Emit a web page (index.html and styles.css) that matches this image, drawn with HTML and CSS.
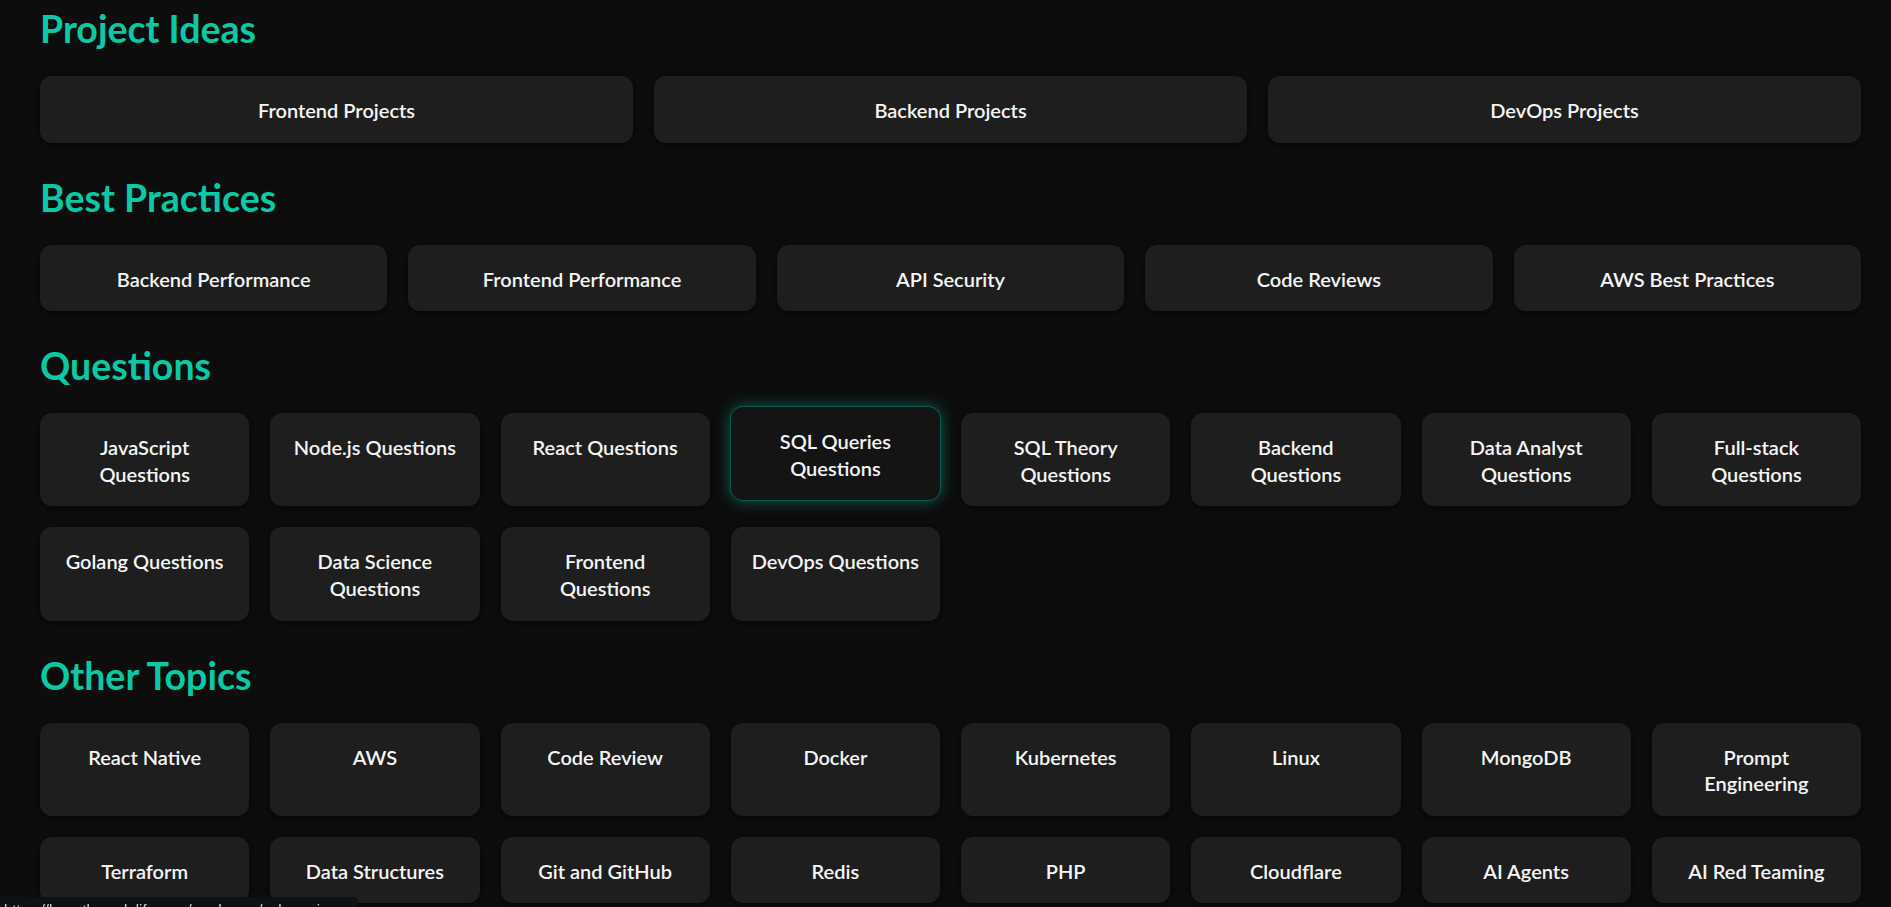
FILE: index.html
```html
<!DOCTYPE html>
<html lang="en">
<head>
<meta charset="utf-8">
<title>Guides</title>
<link rel="stylesheet" href="styles.css">
</head>
<body>
<main class="page">
  <section class="section">
    <h2 class="section-title">Project Ideas</h2>
    <div class="grid grid-3">
      <a class="card" href="#">Frontend Projects</a>
      <a class="card" href="#">Backend Projects</a>
      <a class="card" href="#">DevOps Projects</a>
    </div>
  </section>

  <section class="section">
    <h2 class="section-title">Best Practices</h2>
    <div class="grid grid-5">
      <a class="card" href="#">Backend Performance</a>
      <a class="card" href="#">Frontend Performance</a>
      <a class="card" href="#">API Security</a>
      <a class="card" href="#">Code Reviews</a>
      <a class="card" href="#">AWS Best Practices</a>
    </div>
  </section>

  <section class="section">
    <h2 class="section-title">Questions</h2>
    <div class="grid grid-8">
      <a class="card" href="#">JavaScript Questions</a>
      <a class="card" href="#">Node.js Questions</a>
      <a class="card" href="#">React Questions</a>
      <a class="card card-active" href="#">SQL Queries Questions</a>
      <a class="card" href="#">SQL Theory Questions</a>
      <a class="card" href="#">Backend Questions</a>
      <a class="card" href="#">Data Analyst Questions</a>
      <a class="card" href="#">Full-stack Questions</a>
      <a class="card" href="#">Golang Questions</a>
      <a class="card" href="#">Data Science Questions</a>
      <a class="card" href="#">Frontend Questions</a>
      <a class="card" href="#">DevOps Questions</a>
    </div>
  </section>

  <section class="section">
    <h2 class="section-title">Other Topics</h2>
    <div class="grid grid-8">
      <a class="card" href="#">React Native</a>
      <a class="card" href="#">AWS</a>
      <a class="card" href="#">Code Review</a>
      <a class="card" href="#">Docker</a>
      <a class="card" href="#">Kubernetes</a>
      <a class="card" href="#">Linux</a>
      <a class="card" href="#">MongoDB</a>
      <a class="card" href="#">Prompt Engineering</a>
      <a class="card" href="#">Terraform</a>
      <a class="card" href="#">Data Structures</a>
      <a class="card" href="#">Git and GitHub</a>
      <a class="card" href="#">Redis</a>
      <a class="card" href="#">PHP</a>
      <a class="card" href="#">Cloudflare</a>
      <a class="card" href="#">AI Agents</a>
      <a class="card" href="#">AI Red Teaming</a>
    </div>
  </section>
</main>
<div class="status-bar">https://learnthecodelife.com/roadmaps/sql-queries-questions</div>
</body>
</html>
```

FILE: styles.css
```css
html, body {
  margin: 0;
  padding: 0;
  background: #0d0d0d;
}

body {
  font-family: Lato, "Open Sans", "Noto Sans", sans-serif;
  color: #f4f4f4;
  overflow: hidden;
}

.page {
  padding: 6px 30px 0 40px;
}

.section {
  margin-bottom: 32px;
}

.section-title {
  margin: 0 0 25px 0;
  font-size: 37.5px;
  line-height: 45px;
  font-weight: 700;
  color: #0cc9a5;
}

.grid {
  display: grid;
  gap: 21px;
}

.grid-3 { grid-template-columns: repeat(3, 1fr); }
.grid-5 { grid-template-columns: repeat(5, 1fr); }
.grid-8 { grid-template-columns: repeat(8, 1fr); }

.card {
  display: block;
  padding: 21px 20px 19px;
  border-radius: 12px;
  background: #1e1e1e;
  color: #f5f5f5;
  text-decoration: none;
  text-align: center;
  font-size: 20px;
  line-height: 26.6px;
  font-weight: 600;
  box-shadow: 0 2px 10px rgba(0, 0, 0, 0.55);
}

.card-active {
  background: #141414;
  transform: translateY(-6px);
  box-shadow: 0 0 0 1px rgba(12, 201, 165, 0.25), 0 0 15px rgba(12, 201, 165, 0.5);
}

.status-bar {
  position: fixed;
  left: 0;
  bottom: -17px;
  width: 358px;
  height: 27px;
  padding: 3px 0 0 4px;
  box-sizing: border-box;
  background: #0e1115;
  color: #d8d8d8;
  font-family: "Liberation Sans", Arial, sans-serif;
  font-size: 15px;
  line-height: 20px;
  white-space: nowrap;
  overflow: hidden;
  border-top-right-radius: 5px;
}
```
